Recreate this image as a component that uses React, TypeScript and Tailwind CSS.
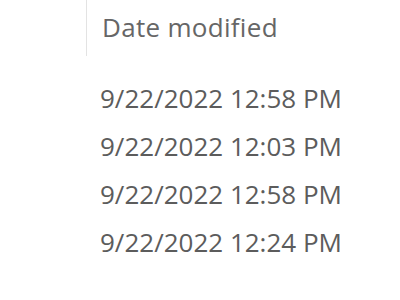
export default function App() {
  const rows = [
    "9/22/2022 12:58 PM",
    "9/22/2022 12:03 PM",
    "9/22/2022 12:58 PM",
    "9/22/2022 12:24 PM",
  ];

  return (
    <div className="w-[400px] h-[300px] bg-white overflow-hidden font-['Open_Sans',sans-serif] text-[#5c5c5c]">
      <div className="ml-[86px] h-[56px] border-l border-[#e3e3e3] pl-[15px] pt-[9px]">
        <span className="text-[26px] tracking-[0.3px] leading-[36px] text-[#666]">Date modified</span>
      </div>
      <div className="flex flex-col pl-[100px] pt-[24px] gap-[12px]">
        {rows.map((r, i) => (
          <div key={i} className="text-[26px] leading-[36px] whitespace-nowrap">
            {r}
          </div>
        ))}
      </div>
    </div>
  );
}
